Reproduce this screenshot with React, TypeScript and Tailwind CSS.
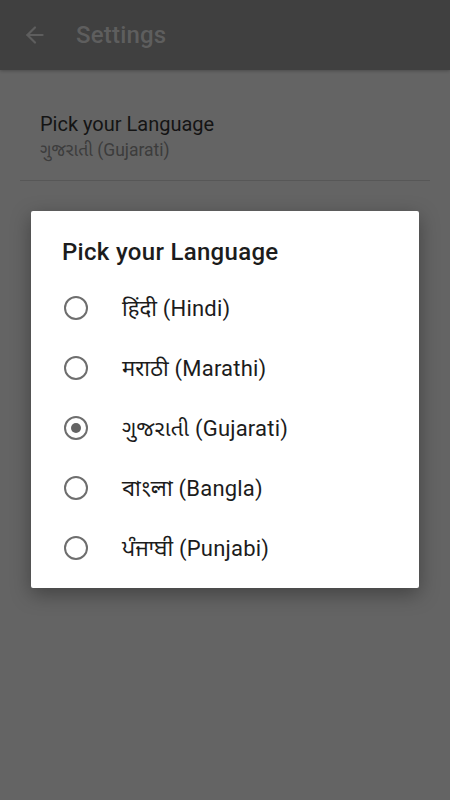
import { ArrowLeft } from 'lucide-react';

const langs = [
  { key: 'hi', label: 'हिंदी (Hindi)' },
  { key: 'mr', label: 'मराठी (Marathi)' },
  { key: 'gu', label: 'ગુજરાતી (Gujarati)' },
  { key: 'bn', label: 'বাংলা (Bangla)' },
  { key: 'pa', label: 'ਪੰਜਾਬੀ (Punjabi)' },
];

const font = "font-['Roboto','Noto_Sans','Noto_Sans_Devanagari','Noto_Sans_Gujarati','Noto_Sans_Bengali','Noto_Sans_Gurmukhi',sans-serif]";

function Radio({ checked }: { checked: boolean }) {
  return (
    <div className="w-6 h-6 rounded-full border-2 border-[#6e6e6e] flex items-center justify-center shrink-0">
      {checked && <div className="w-[10px] h-[10px] rounded-full bg-[#646464]" />}
    </div>
  );
}

export default function App() {
  const selected = 'gu';

  return (
    <div className={`relative w-[450px] h-[800px] bg-[#646464] overflow-hidden ${font}`}>
      {/* toolbar (dimmed) */}
      <div className="h-[70px] bg-[#404040] flex items-center shadow-[0_1px_3px_rgba(0,0,0,0.25)]">
        <div className="w-[70px] flex justify-center">
          <ArrowLeft size={26} color="#5e5e5e" strokeWidth={2} />
        </div>
        <div className="text-[24px] font-medium text-[#5e5e5e] pl-[6px] tracking-[0.2px]">Settings</div>
      </div>

      {/* preference list */}
      <div className="px-5">
        <div className="pt-[40px] pb-[18px] px-5 border-b border-[#575757]">
          <div className="text-[20px] leading-[28px] text-[#141414]">Pick your Language</div>
          <div className="text-[17.5px] leading-[24px] text-[#3c3c3c]">ગુજરાતી (Gujarati)</div>
        </div>
      </div>

      {/* dialog */}
      <div className="absolute left-[31px] top-[211px] w-[388px] bg-white rounded-[2px] shadow-[0_6px_20px_rgba(0,0,0,0.35)] pt-[26px] pb-[10px]">
        <div className="pl-[31px] text-[24px] leading-[30px] font-medium text-[#1c1c1c] mb-[11px] tracking-[0.3px]">
          Pick your Language
        </div>
        {langs.map(l => (
          <div key={l.key} className="h-[60px] flex items-center pl-[33px]">
            <Radio checked={l.key === selected} />
            <div className="pl-[34px] text-[22px] text-[#1c1c1c] tracking-[0.2px]">{l.label}</div>
          </div>
        ))}
      </div>
    </div>
  );
}
